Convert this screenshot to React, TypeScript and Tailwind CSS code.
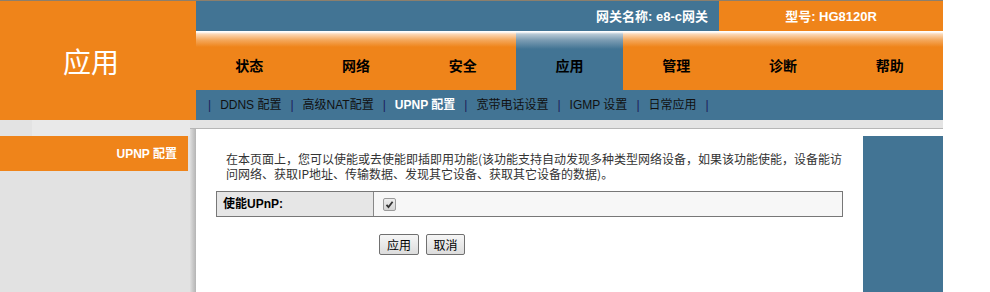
export default function App() {
  const tabs = ["状态", "网络", "安全", "应用", "管理", "诊断", "帮助"];
  const sub = ["DDNS 配置", "高级NAT配置", "UPNP 配置", "宽带电话设置", "IGMP 设置", "日常应用"];
  return (
    <div className="w-[990px] h-[292px] bg-white overflow-hidden font-['Liberation_Sans','Noto_Sans_CJK_SC',sans-serif] text-[12px]">
      {/* Header */}
      <div className="flex w-[943px] h-[120px]">
        <div className="w-[196px] h-full bg-[#ef841a] border-t border-[#8c7f6c] flex items-center justify-center pr-[14px]">
          <span className="text-white text-[28px] leading-none font-['Noto_Sans_CJK_SC',serif]">应用</span>
        </div>
        <div className="w-[747px] flex flex-col">
          <div className="h-[31px] flex border-t border-[#8c7f6c]">
            <div className="flex-1 bg-[#427494] flex items-center justify-end pr-[11px] text-white font-bold text-[13px] leading-none">
              网关名称: e8-c网关
            </div>
            <div className="w-[224px] bg-[#ef841a] flex items-center justify-center text-white font-bold text-[13px] leading-none">
              型号: HG8120R
            </div>
          </div>
          <div className="h-[59px] flex">
            {tabs.map((t, i) =>
              i === 3 ? (
                <div
                  key={t}
                  className="flex-1 flex justify-center pt-[27px] bg-[linear-gradient(to_bottom,#ffffff_0px,#ffffff_1px,#b9cad6_3px,#7d9db3_9px,#427494_18px)]"
                >
                  <span className="text-[14px] leading-[14px] font-bold text-black font-['Noto_Sans_CJK_SC',sans-serif]">{t}</span>
                </div>
              ) : (
                <div
                  key={t}
                  className="flex-1 flex justify-center pt-[27px] bg-[linear-gradient(to_bottom,#ffffff_0px,#ffffff_1px,#fbd9b8_3px,#f4a85c_9px,#ef841a_16px)]"
                >
                  <span className="text-[14px] leading-[14px] font-bold text-black font-['Noto_Sans_CJK_SC',sans-serif]">{t}</span>
                </div>
              )
            )}
          </div>
          <div className="h-[30px] bg-[#427494] flex items-center pl-[12px] text-[12px] leading-none">
            {sub.map((s, i) => (
              <span key={s} className="flex items-center">
                <span className="text-[#1c1c5c]">|</span>
                <span className={i === 2 ? "mx-[9px] text-white font-bold" : "mx-[9px] text-[#111]"}>{s}</span>
              </span>
            ))}
            <span className="text-[#1c1c5c]">|</span>
          </div>
        </div>
      </div>

      {/* Body */}
      <div className="flex h-[172px]">
        <div className="w-[190px] bg-[#e2e2e2] flex flex-col">
          <div className="h-[16px] flex">
            <div className="w-[32px] bg-[#e3e3e3]" />
            <div className="flex-1 bg-[#e9e9e9]" />
          </div>
          <div className="w-[188px] h-[35px] bg-[#ef841a] flex items-center justify-end pr-[11px] text-white font-bold text-[12px] leading-none">
            UPNP 配置
          </div>
        </div>
        <div className="w-[753px] flex flex-col">
          <div className="h-[9px] bg-[#e4e4e4] border-b border-[#b6b6b6]" />
          <div className="flex flex-1">
            <div className="w-[6px] bg-[linear-gradient(to_right,#dedede,#c8c8c8_50%,#b4b4b4)]" />
            <div className="w-[667px] bg-white pl-[20px] pt-[22px]">
              <p className="pl-[10px] text-[12px] leading-[15px] text-[#333] font-['Noto_Sans_CJK_SC',sans-serif]">
                在本页面上，您可以使能或去使能即插即用功能(该功能支持自动发现多种类型网络设备，如果该功能使能，设备能访
                <br />
                问网络、获取IP地址、传输数据、发现其它设备、获取其它设备的数据)。
              </p>
              <div className="mt-[10px] w-[627px] h-[26px] border border-[#777] flex">
                <div className="w-[157px] bg-[#e6e6e6] border-r border-[#888] pl-[6px] flex items-center font-bold text-black text-[12px] leading-none">
                  使能UPnP:
                </div>
                <div className="flex-1 bg-[#f7f7f7] pl-[9px] flex items-center">
                  <span className="w-[13px] h-[13px] rounded-[2px] border border-[#9a9a9a] bg-[linear-gradient(to_bottom,#eeeeee,#d4d4d4)] flex items-center justify-center">
                    <svg width="9" height="9" viewBox="0 0 9 9">
                      <path d="M1.5 4.8 L3.5 7 L7.6 1.8" fill="none" stroke="#333" strokeWidth="1.8" />
                    </svg>
                  </span>
                </div>
              </div>
              <div className="mt-[17px] ml-[163px] flex gap-[7px]">
                <button className="w-[40px] h-[21px] border border-[#707070] rounded-[2px] bg-[linear-gradient(to_bottom,#f6f6f6,#dcdcdc)] text-[12px] leading-none text-black font-['Noto_Sans_CJK_SC',sans-serif]">
                  应用
                </button>
                <button className="w-[39px] h-[21px] border border-[#707070] rounded-[2px] bg-[linear-gradient(to_bottom,#f6f6f6,#dcdcdc)] text-[12px] leading-none text-black font-['Noto_Sans_CJK_SC',sans-serif]">
                  取消
                </button>
              </div>
            </div>
            <div className="w-[80px] flex flex-col">
              <div className="h-[7px] bg-white" />
              <div className="flex-1 bg-[#427494]" />
            </div>
          </div>
        </div>
      </div>
    </div>
  );
}
